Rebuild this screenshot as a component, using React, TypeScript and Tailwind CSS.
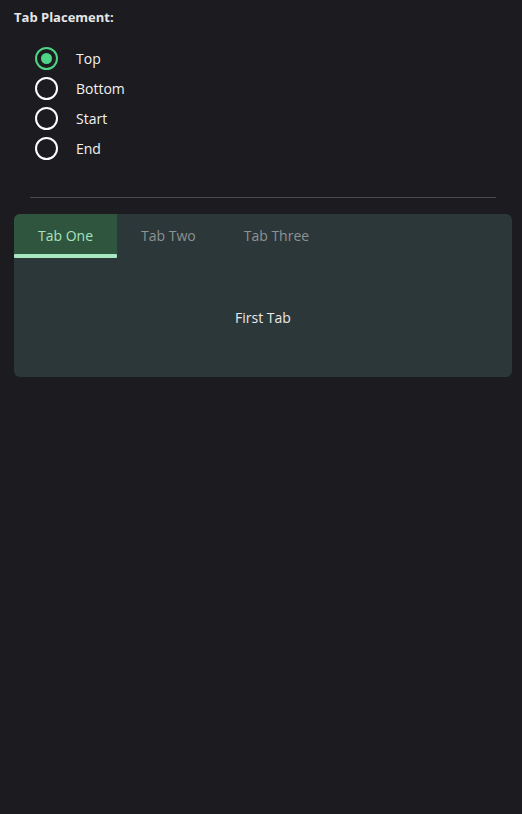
import { useState } from "react";

const OPTIONS = ["Top", "Bottom", "Start", "End"];
const TABS = [
  { label: "Tab One", body: "First Tab" },
  { label: "Tab Two", body: "Second Tab" },
  { label: "Tab Three", body: "Third Tab" },
];

const Radio = ({
  label,
  checked,
  onSelect,
}: {
  label: string;
  checked: boolean;
  onSelect: () => void;
}) => (
  <button
    type="button"
    onClick={onSelect}
    className="flex h-[30px] items-center gap-[18px] text-left"
  >
    <span
      className={`flex h-[23px] w-[23px] items-center justify-center rounded-full border-2 ${
        checked ? "border-[#4fd386]" : "border-white"
      }`}
    >
      {checked && <span className="h-[11px] w-[11px] rounded-full bg-[#4fd386]" />}
    </span>
    <span className="text-[14px] text-[#f2f2f2]">{label}</span>
  </button>
);

export default function App() {
  const [placement, setPlacement] = useState("Top");
  const [tab, setTab] = useState(0);

  return (
    <div
      className="min-h-screen bg-[#1c1c20] pl-[14px] pr-[10px] pt-[8px] text-white"
      style={{ fontFamily: '"Open Sans", "Noto Sans", sans-serif' }}
    >
      <div className="text-[13px] font-bold text-[#e6e6e6]">Tab Placement:</div>

      <div className="mt-[16px] flex flex-col pl-[21px]">
        {OPTIONS.map((o) => (
          <Radio
            key={o}
            label={o}
            checked={placement === o}
            onSelect={() => setPlacement(o)}
          />
        ))}
      </div>

      <div className="mx-[16px] mt-[33px] h-px bg-[#4a4a4e]" />

      <div className="mt-[16px] overflow-hidden rounded-[6px] bg-[#2c3739]">
        <div className="flex">
          {TABS.map((t, i) => (
            <button
              key={t.label}
              type="button"
              onClick={() => setTab(i)}
              className={`relative flex h-[44px] items-center px-[24px] text-[14px] ${
                tab === i ? "bg-[#30553f] text-[#a6e3bd]" : "text-[#8e9293]"
              }`}
            >
              {t.label}
              {tab === i && (
                <span className="absolute inset-x-0 bottom-0 h-[4px] rounded-[1px] bg-[#a8e7c1]" />
              )}
            </button>
          ))}
        </div>
        <div className="flex h-[119px] items-center justify-center text-[14px] text-[#e8e8e8]">
          {TABS[tab].body}
        </div>
      </div>
    </div>
  );
}
